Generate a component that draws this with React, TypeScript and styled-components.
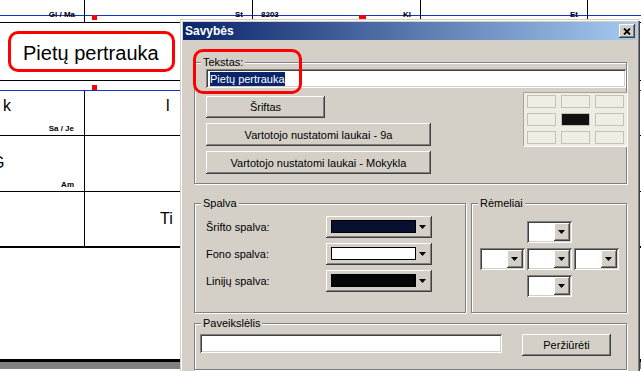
import { Fragment } from "react";
import styled, { createGlobalStyle } from "styled-components";

const face = '"Liberation Sans", Arial, sans-serif';
const COLS = "85px 168px 168px 167px 1fr";

const GlobalStyle = createGlobalStyle`
  html, body { margin: 0; padding: 0; background: #fff; }
  body { font-family: ${face}; }
`;

const raised = `box-shadow: inset -1px -1px 0 #404040, inset 1px 1px 0 #ffffff, inset -2px -2px 0 #808080, inset 2px 2px 0 #d4d0c8;`;
const sunken = `box-shadow: inset 1px 1px 0 #808080, inset -1px -1px 0 #ffffff, inset 2px 2px 0 #404040, inset -2px -2px 0 #d4d0c8;`;

/* ---------- timetable behind the dialog ---------- */

const Sheet = styled.div`
  position: relative;
  width: 641px;
  height: 371px;
  overflow: hidden;
  background: #fff;
  display: flex;
  flex-direction: column;
  padding-bottom: 2px;
  box-sizing: border-box;
  font-family: ${face};
  color: #000;
`;

const HeaderRow = styled.div`
  display: grid;
  grid-template-columns: ${COLS};
  height: 22px;
  flex: none;
  border-bottom: 1px solid #000;
  background: linear-gradient(to bottom, transparent 15px, #1534c8 15px, #1534c8 16px, transparent 16px);
`;

const HeaderCell = styled.div<{ $last?: boolean }>`
  display: flex;
  justify-content: space-between;
  align-items: flex-start;
  padding: 10px 9px 0 8px;
  border-right: ${(p) => (p.$last ? "none" : "1px solid #000")};
  font: bold 8px/9px ${face};
`;

const LunchRow = styled.div`
  height: 57px;
  flex: none;
  border-bottom: 1px solid #000;
  display: flex;
  align-items: center;
  padding-left: 8px;
`;

const LunchTitle = styled.div`
  width: 167px;
  height: 41px;
  box-sizing: border-box;
  border: 3px solid #ff0000;
  border-radius: 10px;
  padding: 4px 0 0 12px;
  display: flex;
  align-items: center;
  font: 20px ${face};
`;

const GapRow = styled.div`
  height: 9px;
  flex: none;
  border-bottom: 1px solid #1534c8;
`;

const BodyRow = styled.div<{ $h: number; $rule?: number }>`
  display: grid;
  grid-template-columns: ${COLS};
  height: ${(p) => p.$h}px;
  flex: none;
  border-bottom: ${(p) => p.$rule ?? 1}px solid #000;
`;

const BodyCell = styled.div<{ $last?: boolean }>`
  display: flex;
  flex-direction: column;
  justify-content: space-between;
  padding: 0 10px 2px 0;
  border-right: ${(p) => (p.$last ? "none" : "1px solid #000")};
  overflow: hidden;
`;

const Lesson = styled.span<{ $top: number; $left: number }>`
  font: 16px/18px ${face};
  margin: ${(p) => p.$top}px 0 0 ${(p) => p.$left}px;
  white-space: nowrap;
`;

const Tag = styled.span`
  align-self: flex-end;
  margin-top: auto;
  font: bold 8px/9px ${face};
`;

const Blank = styled.div`
  flex: 1;
`;

const BottomRule = styled.div`
  height: 3px;
  background: #000;
  flex: none;
`;

const GrayBand = styled.div`
  height: 7px;
  background: #808080;
  flex: none;
`;

const Handle = styled.div<{ $x: number; $y: number; $w?: number }>`
  position: absolute;
  left: ${(p) => p.$x}px;
  top: ${(p) => p.$y}px;
  width: ${(p) => p.$w ?? 5}px;
  height: 5px;
  background: #ff0000;
`;

/* ---------- dialog ---------- */

const Dialog = styled.div`
  position: absolute;
  left: 180px;
  top: 19px;
  width: 460px;
  height: 370px;
  box-sizing: border-box;
  padding: 3px;
  background: #d4d0c8;
  box-shadow: inset 1px 1px 0 #d4d0c8, inset 2px 2px 0 #ffffff, inset -1px -1px 0 #404040,
    inset -2px -2px 0 #808080;
  display: flex;
  flex-direction: column;
  font: 11px ${face};
  color: #000;
`;

const TitleBar = styled.div`
  height: 18px;
  flex: none;
  display: flex;
  align-items: center;
  justify-content: space-between;
  padding: 0 2px 0 2px;
  background: linear-gradient(to right, #0a246a, #a6caf0);
`;

const Title = styled.span`
  font: bold 12px ${face};
  color: #fff;
`;

const CloseButton = styled.div`
  width: 16px;
  height: 14px;
  background: #d4d0c8;
  ${raised}
  display: flex;
  align-items: center;
  justify-content: center;
`;

const Client = styled.div`
  flex: 1;
  display: flex;
  flex-direction: column;
  padding: 22px 10px 0 11px;
  position: relative;
`;

const Group = styled.div`
  display: flex;
  flex-direction: column;
  border: 1px solid #808080;
  box-shadow: inset 1px 1px 0 #fff, 1px 1px 0 #fff;
`;

const Caption = styled.span`
  align-self: flex-start;
  margin: -7px 0 0 6px;
  padding: 0 2px;
  line-height: 13px;
  background: #d4d0c8;
`;

const TextBody = styled.div`
  display: flex;
  flex-direction: column;
  padding: 0 0 9px 11px;
`;

const TextField = styled.div<{ $w?: number }>`
  height: 19px;
  width: ${(p) => (p.$w ? `${p.$w}px` : "auto")};
  box-sizing: border-box;
  background: #fff;
  ${sunken}
  display: flex;
  align-items: center;
  padding-left: 4px;
`;

const Selected = styled.span`
  background: #0a246a;
  color: #fff;
  line-height: 14px;
`;

const TextRow = styled.div`
  display: flex;
  justify-content: space-between;
  align-items: flex-start;
  margin-top: 4px;
`;

const ButtonStack = styled.div`
  display: flex;
  flex-direction: column;
  align-items: flex-start;
  gap: 5px;
  padding-top: 4px;
`;

const Button = styled.button<{ $w: number; $h?: number }>`
  width: ${(p) => p.$w}px;
  height: ${(p) => p.$h ?? 23}px;
  border: none;
  padding: 0;
  background: #d4d0c8;
  ${raised}
  font: 11px ${face};
  color: #000;
`;

const AlignGrid = styled.div`
  display: grid;
  grid-template-columns: repeat(3, 29px);
  grid-template-rows: repeat(3, 13px);
  gap: 5px;
  padding: 2px 3px;
  margin-right: -2px;
  background: #eeece3;
  border: 1px solid;
  border-color: #a8a598 #fff #fff #a8a598;
`;

const AlignCell = styled.div<{ $on?: boolean }>`
  box-sizing: border-box;
  border: 1px solid #c4c1b7;
  background: ${(p) => (p.$on ? "#111" : "#efede4")};
`;

const MiddleRow = styled.div`
  display: flex;
  gap: 5px;
  margin-top: 19px;
`;

const ColorGroup = styled(Group)`
  width: 272px;
  box-sizing: border-box;
`;

const FrameGroup = styled(Group)`
  flex: 1;
`;

const ColorBody = styled.div`
  display: grid;
  grid-template-columns: 120px 106px;
  row-gap: 5px;
  align-items: center;
  padding: 6px 0 20px 11px;
`;

const ColorCombo = styled.div`
  height: 22px;
  box-sizing: border-box;
  background: #d4d0c8;
  ${raised}
  display: flex;
  align-items: center;
  padding: 0 6px 1px 5px;
  gap: 3px;
`;

const Swatch = styled.div<{ $c: string }>`
  width: 85px;
  height: 13px;
  box-sizing: border-box;
  border: 1px solid #000;
  background: ${(p) => p.$c};
`;

const FrameBody = styled.div`
  display: grid;
  grid-template-columns: repeat(3, 45px);
  grid-auto-rows: 22px;
  column-gap: 2px;
  row-gap: 5px;
  justify-content: center;
  padding-top: 11px;
`;

const SmallCombo = styled.div<{ $col: number; $row: number }>`
  grid-column: ${(p) => p.$col};
  grid-row: ${(p) => p.$row};
  background: #fff;
  ${sunken}
  display: flex;
  justify-content: flex-end;
  padding: 2px;
`;

const DropButton = styled.div`
  width: 16px;
  background: #d4d0c8;
  ${raised}
  display: flex;
  align-items: center;
  justify-content: center;
`;

const PictureGroup = styled(Group)`
  margin-top: 10px;
`;

const PictureBody = styled.div`
  display: flex;
  align-items: flex-start;
  gap: 20px;
  padding: 4px 0 13px 5px;
`;

/* red call-out drawn over the "Tekstas" field */
const Note = styled.div`
  position: absolute;
  left: 10px;
  top: 9px;
  width: 109px;
  height: 45px;
  box-sizing: border-box;
  border: 3px solid #ff0000;
  border-radius: 10px;
`;

function Arrow() {
  return (
    <svg width="7" height="4" viewBox="0 0 7 4">
      <path d="M0 0h7L3.5 4z" fill="#000" />
    </svg>
  );
}

function Cross() {
  return (
    <svg width="8" height="7" viewBox="0 0 8 7">
      <path d="M1 0.5l6 6M7 0.5l-6 6" stroke="#000" strokeWidth="1.8" />
    </svg>
  );
}

const colorRows = [
  { label: "Šrifto spalva:", color: "#081030" },
  { label: "Fono spalva:", color: "#ffffff" },
  { label: "Linijų spalva:", color: "#060606" },
];

const frameSlots = [
  { col: 2, row: 1 },
  { col: 1, row: 2 },
  { col: 2, row: 2 },
  { col: 3, row: 2 },
  { col: 2, row: 3 },
];

export default function App() {
  return (
    <>
      <GlobalStyle />
      <Sheet>
        <HeaderRow>
          <HeaderCell>
            <span />
            <span>Gl / Ma</span>
          </HeaderCell>
          <HeaderCell>
            <span />
            <span>St</span>
          </HeaderCell>
          <HeaderCell>
            <span>8203</span>
            <span>Kl</span>
          </HeaderCell>
          <HeaderCell>
            <span />
            <span>Et</span>
          </HeaderCell>
          <HeaderCell $last />
        </HeaderRow>
        <LunchRow>
          <LunchTitle>Pietų pertrauka</LunchTitle>
        </LunchRow>
        <GapRow />
        <BodyRow $h={44}>
          <BodyCell>
            <Lesson $top={6} $left={3}>k</Lesson>
            <Tag>Sa / Je</Tag>
          </BodyCell>
          <BodyCell>
            <Lesson $top={6} $left={81}>l</Lesson>
          </BodyCell>
          <BodyCell />
          <BodyCell />
          <BodyCell $last />
        </BodyRow>
        <BodyRow $h={55}>
          <BodyCell>
            <Lesson $top={18} $left={-8}>G</Lesson>
            <Tag>Am</Tag>
          </BodyCell>
          <BodyCell />
          <BodyCell />
          <BodyCell />
          <BodyCell $last />
        </BodyRow>
        <BodyRow $h={54} $rule={2}>
          <BodyCell />
          <BodyCell>
            <Lesson $top={18} $left={75}>Ti</Lesson>
          </BodyCell>
          <BodyCell />
          <BodyCell />
          <BodyCell $last />
        </BodyRow>
        <Blank />
        <BottomRule />
        <GrayBand />

        <Handle $x={92} $y={15} />
        <Handle $x={92} $y={85} />
        <Handle $x={359} $y={15} $w={7} />

        <Dialog>
          <TitleBar>
            <Title>Savybės</Title>
            <CloseButton>
              <Cross />
            </CloseButton>
          </TitleBar>
          <Client>
            <Group>
              <Caption>Tekstas:</Caption>
              <TextBody>
                <TextField>
                  <Selected>Pietų pertrauka</Selected>
                </TextField>
                <TextRow>
                  <ButtonStack>
                    <Button $w={119} $h={22}>Šriftas</Button>
                    <Button $w={225}>Vartotojo nustatomi laukai - 9a</Button>
                    <Button $w={225}>Vartotojo nustatomi laukai - Mokykla</Button>
                  </ButtonStack>
                  <AlignGrid>
                    {Array.from({ length: 9 }, (_, i) => (
                      <AlignCell key={i} $on={i === 4} />
                    ))}
                  </AlignGrid>
                </TextRow>
              </TextBody>
            </Group>

            <MiddleRow>
              <ColorGroup>
                <Caption>Spalva</Caption>
                <ColorBody>
                  {colorRows.map((r) => (
                    <Fragment key={r.label}>
                      <span>{r.label}</span>
                      <ColorCombo>
                        <Swatch $c={r.color} />
                        <Arrow />
                      </ColorCombo>
                    </Fragment>
                  ))}
                </ColorBody>
              </ColorGroup>
              <FrameGroup>
                <Caption>Rėmeliai</Caption>
                <FrameBody>
                  {frameSlots.map((s, i) => (
                    <SmallCombo key={i} $col={s.col} $row={s.row}>
                      <DropButton>
                        <Arrow />
                      </DropButton>
                    </SmallCombo>
                  ))}
                </FrameBody>
              </FrameGroup>
            </MiddleRow>

            <PictureGroup>
              <Caption>Paveikslėlis</Caption>
              <PictureBody>
                <TextField $w={302} />
                <Button $w={89} $h={22}>Peržiūrėti</Button>
              </PictureBody>
            </PictureGroup>

            <Note />
          </Client>
        </Dialog>
      </Sheet>
    </>
  );
}
